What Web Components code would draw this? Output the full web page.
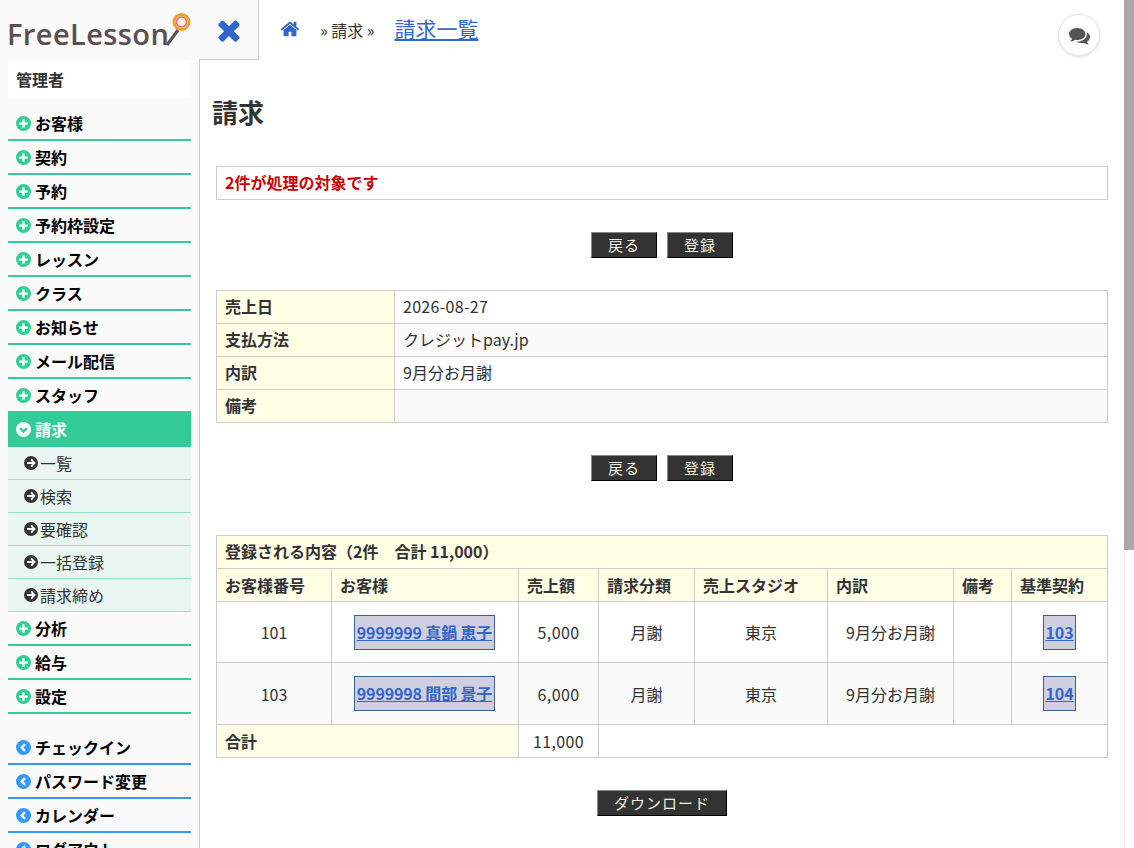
<!DOCTYPE html>
<html lang="ja">
<head>
<meta charset="utf-8">
<title>請求</title>
<style>
    html, body { margin: 0; height: 848px; overflow: hidden; background: #fff; }
    body { font-family: "Noto Sans CJK JP", "Noto Sans", sans-serif; color: #333; font-size: 16px; }
</style>
</head>
<body>
<fl-app>
    <fl-sidebar slot="sidebar">
        <fl-menu-item>お客様</fl-menu-item>
        <fl-menu-item>契約</fl-menu-item>
        <fl-menu-item>予約</fl-menu-item>
        <fl-menu-item>予約枠設定</fl-menu-item>
        <fl-menu-item>レッスン</fl-menu-item>
        <fl-menu-item>クラス</fl-menu-item>
        <fl-menu-item>お知らせ</fl-menu-item>
        <fl-menu-item>メール配信</fl-menu-item>
        <fl-menu-item>スタッフ</fl-menu-item>
        <fl-menu-item active>請求</fl-menu-item>
        <fl-sub-item>一覧</fl-sub-item>
        <fl-sub-item>検索</fl-sub-item>
        <fl-sub-item>要確認</fl-sub-item>
        <fl-sub-item>一括登録</fl-sub-item>
        <fl-sub-item>請求締め</fl-sub-item>
        <fl-menu-item>分析</fl-menu-item>
        <fl-menu-item>給与</fl-menu-item>
        <fl-menu-item>設定</fl-menu-item>
        <fl-menu-item kind="link" style="margin-top:17px">チェックイン</fl-menu-item>
        <fl-menu-item kind="link">パスワード変更</fl-menu-item>
        <fl-menu-item kind="link">カレンダー</fl-menu-item>
        <fl-menu-item kind="link">ログアウト</fl-menu-item>
    </fl-sidebar>
    <fl-header slot="header"></fl-header>
    <fl-title>請求</fl-title>
    <fl-notice>2件が処理の対象です</fl-notice>
    <fl-actions style="margin-top:32px"><fl-button>戻る</fl-button><fl-button>登録</fl-button></fl-actions>
    <fl-detail-table style="margin-top:32px"></fl-detail-table>
    <fl-actions style="margin-top:32px"><fl-button>戻る</fl-button><fl-button>登録</fl-button></fl-actions>
    <fl-invoice-table style="margin-top:54px"></fl-invoice-table>
    <fl-actions style="margin-top:32px"><fl-button>ダウンロード</fl-button></fl-actions>
</fl-app>

<script>
const ICONS = {
    home: 'M1472 992v480q0 26-19 45t-45 19h-384v-384h-256v384h-384q-26 0-45-19t-19-45v-480q0-1 .5-3t.5-3l575-474 575 474q1 2 1 6zm223-69l-62 74q-8 9-21 11h-3q-13 0-21-7l-692-577-692 577q-12 8-24 7-13-2-21-11l-62-74q-8-10-7-23.500t11-21.500l719-599q32-26 76-26t76 26l244 204v-195q0-14 9-23t23-9h192q14 0 23 9t9 23v408l219 182q10 8 11 21.500t-7 23.500z',
    times: 'M1490 1322q0 40-28 68l-136 136q-28 28-68 28t-68-28l-294-294-294 294q-28 28-68 28t-68-28l-136-136q-28-28-28-68t28-68l294-294-294-294q-28-28-28-68t28-68l136-136q28-28 68-28t68 28l294 294 294-294q28-28 68-28t68 28l136 136q28 28 28 68t-28 68l-294 294 294 294q28 28 28 68z',
    comments: 'M1408 768q0 139-94 257t-256.500 186.500-353.500 68.500q-86 0-176-16-124 88-278 128-36 9-86 16h-3q-11 0-20.500-8t-11.500-21q-1-3-1-6.500t.5-6.500 2-6l2.500-5 3.500-5.500 4-5 4.500-5 4-4.500q5-6 23-25t26-29.500 22.500-29 25-38.500 20.500-44q-124-72-195-177t-71-224q0-139 94-257t256.500-186.500 353.500-68.500 353.500 68.500 256.500 186.500 94 257zm384 256q0 120-71 224.500t-195 176.500q10 24 20.500 44t25 38.500 22.500 29 26 29.500 23 25q1 1 4 4.500t4.500 5 4 5 3.500 5.500l2.500 5 2 6 .5 6.500-1 6.500q-3 14-13 22t-22 7q-50-7-86-16-154-40-278-128-90 16-176 16-271 0-472-132 58 4 88 4 161 0 309-45t264-129q125-92 192-212t67-254q0-77-23-152 129 71 204 178t75 230z'
};
const faIcon = (name, size, color) => `<svg width="${size}" height="${size}" viewBox="0 0 1792 1792" fill="${color}" style="display:block"><path d="${ICONS[name]}"/></svg>`;

// round icons of the menu: a filled circle with the glyph in the background colour
const circleIcon = (glyph, size, color, inner) => {
    const shapes = {
        plus: `<path d="M8 3.500v9M3.500 8h9" stroke="${inner}" stroke-width="2.400" fill="none"/>`,
        down: `<path d="M4.400 6.600 8 10.200l3.600-3.600" stroke="${inner}" stroke-width="2.600" fill="none"/>`,
        left: `<path d="M9.600 4.400 6 8l3.600 3.600" stroke="${inner}" stroke-width="2.600" fill="none"/>`,
        right: `<path d="M8.200 3.900 12 8l-3.800 4.100M3.400 8H11" stroke="${inner}" stroke-width="2.200" fill="none"/>`
    };
    return `<svg width="${size}" height="${size}" viewBox="0 0 16 16" style="display:block;flex:none"><circle cx="8" cy="8" r="8" fill="${color}"/>${shapes[glyph]}</svg>`;
};

class FlApp extends HTMLElement {
    constructor() {
        super();
        this.attachShadow({ mode: 'open' }).innerHTML = /*html*/`
            <style>
                :host { display: flex; height: 848px; overflow: hidden; }
                .main { flex: 1; min-width: 0; display: flex; flex-direction: column; }
                .content { padding: 0 16px; }
                .scrollbar { width: 10px; flex: none; background: #fff; border-left: 1px solid #f1f1f1; box-sizing: border-box; }
                .thumb { height: 550px; background: #a9a9a9; margin-left: -1px; }
            </style>
            <slot name="sidebar"></slot>
            <div class="main">
                <slot name="header"></slot>
                <div class="content"><slot></slot></div>
            </div>
            <div class="scrollbar"><div class="thumb"></div></div>
        `;
    }
}

class FlSidebar extends HTMLElement {
    constructor() {
        super();
        this.attachShadow({ mode: 'open' }).innerHTML = /*html*/`
            <style>
                :host { display: block; box-sizing: border-box; width: 200px; flex: none; background: #fafafa; height: 848px; overflow: hidden; border-right: 1px solid #ccc; }
                .logo { height: 60px; position: relative; font-family: "Open Sans", sans-serif; }
                .logo span { position: absolute; left: 7px; top: 12px; font-size: 29px; font-weight: 600; line-height: 44px; color: #5b4f4f; letter-spacing: .4px; white-space: nowrap; }
                .logo svg { position: absolute; left: 0; top: 0; }
                .user { margin: 0 8px; height: 38px; line-height: 38px; background: #fff; padding-left: 8px; font-weight: bold; font-size: 16px; color: #333; }
                .menu { padding: 9px 8px 0; }
            </style>
            <div class="logo">
                <span>FreeLesson</span>
                <svg width="199" height="60">
                    <path d="M167 45 178 30" stroke="#5b4f4f" stroke-width="3" fill="none"/>
                    <circle cx="181.500" cy="22" r="7.500" fill="#f6ecdc" stroke="#f0a02e" stroke-width="3"/>
                    <circle cx="181.500" cy="22" r="5" fill="none" stroke="#d9767c" stroke-width="1.500"/>
                </svg>
            </div>
            <div class="user">管理者</div>
            <div class="menu"><slot></slot></div>
        `;
    }
}

class FlMenuItem extends HTMLElement {
    connectedCallback() {
        const link = this.getAttribute('kind') === 'link';
        const active = this.hasAttribute('active');
        const color = link ? '#3399ff' : '#33cc99';
        const glyph = link ? 'left' : active ? 'down' : 'plus';
        this.attachShadow({ mode: 'open' }).innerHTML = /*html*/`
            <style>
                :host {
                    display: flex;
                    align-items: center;
                    gap: 4px;
                    box-sizing: border-box;
                    height: 34px;
                    line-height: 30px;
                    padding-left: 8px;
                    border-bottom: 2px solid ${color};
                    font-size: 16px;
                    font-weight: bold;
                    color: ${active ? '#fff' : '#000'};
                    background: ${active ? color : 'none'};
                }
            </style>
            ${circleIcon(glyph, 15, active ? '#fff' : color, active ? color : '#fff')}
            <slot></slot>
        `;
    }
}

class FlSubItem extends HTMLElement {
    constructor() {
        super();
        this.attachShadow({ mode: 'open' }).innerHTML = /*html*/`
            <style>
                :host {
                    display: flex;
                    align-items: center;
                    gap: 2px;
                    box-sizing: border-box;
                    height: 33px;
                    line-height: 30px;
                    padding-left: 16px;
                    border-bottom: 1px solid #99dfc6;
                    background: #e9f5f1;
                    font-size: 16px;
                    color: #333;
                }
            </style>
            ${circleIcon('right', 14, '#333', '#fff')}
            <slot></slot>
        `;
    }
}

class FlHeader extends HTMLElement {
    constructor() {
        super();
        this.attachShadow({ mode: 'open' }).innerHTML = /*html*/`
            <style>
                :host { display: flex; height: 60px; flex: none; position: relative; }
                .toggle {
                    box-sizing: border-box;
                    width: 60px;
                    height: 60px;
                    margin-left: -1px;
                    background: #fafafa;
                    border-right: 1px solid #ccc;
                    border-bottom: 1px solid #ccc;
                    display: flex;
                    align-items: center;
                    justify-content: center;
                }
                nav { display: flex; align-items: center; height: 60px; padding-left: 21px; position: relative; top: -1px; }
                .home { width: 21px; margin-right: 19px; }
                .crumb { font-size: 16px; color: #333; position: relative; top: 1px; }
                a { font-size: 21px; color: #3366cc; margin-left: 20px; position: relative; top: -1px; }
                .chat {
                    position: absolute;
                    left: 858px;
                    top: 14px;
                    box-sizing: border-box;
                    width: 42px;
                    height: 42px;
                    border-radius: 50%;
                    background: #fff;
                    border: 1px solid #e3e3e3;
                    box-shadow: 0 1px 3px rgba(0,0,0,.12);
                    display: flex;
                    align-items: center;
                    justify-content: center;
                }
            </style>
            <div class="toggle">${faIcon('times', 32, '#3366cc')}</div>
            <nav>
                <span class="home">${faIcon('home', 20, '#3366cc')}</span>
                <span class="crumb">» 請求 »</span>
                <a href="#">請求一覧</a>
            </nav>
            <div class="chat">${faIcon('comments', 21, '#555')}</div>
        `;
    }
}

class FlTitle extends HTMLElement {
    constructor() {
        super();
        this.attachShadow({ mode: 'open' }).innerHTML = /*html*/`
            <style>
                :host { display: block; margin: 32px 0 34px -4px; font-size: 26px; line-height: 40px; font-weight: bold; color: #333; }
            </style>
            <slot></slot>
        `;
    }
}

class FlNotice extends HTMLElement {
    constructor() {
        super();
        this.attachShadow({ mode: 'open' }).innerHTML = /*html*/`
            <style>
                :host { display: block; box-sizing: border-box; height: 34px; line-height: 30px; border: 1px solid #ccc; padding-left: 8px; font-weight: bold; font-size: 16px; color: #cc0000; }
            </style>
            <slot></slot>
        `;
    }
}

class FlActions extends HTMLElement {
    constructor() {
        super();
        this.attachShadow({ mode: 'open' }).innerHTML = /*html*/`
            <style>
                :host { display: flex; justify-content: center; gap: 10px; }
            </style>
            <slot></slot>
        `;
    }
}

class FlButton extends HTMLElement {
    constructor() {
        super();
        this.attachShadow({ mode: 'open' }).innerHTML = /*html*/`
            <style>
                :host { display: block; }
                button {
                    display: block;
                    box-sizing: border-box;
                    height: 26px;
                    padding: 0 16px;
                    font: 15px/22px "Noto Sans CJK JP", sans-serif;
                    letter-spacing: 1px;
                    color: #eeeedd;
                    background: #333;
                    border: 1px solid;
                    border-color: #888 #000 #000 #888;
                    cursor: pointer;
                }
            </style>
            <button><slot></slot></button>
        `;
    }
}

const TABLE_STYLE = /*css*/`
    :host { display: block; }
    table { border-collapse: collapse; table-layout: fixed; width: 892px; font-size: 16px; color: #333; }
    th, td { border: 1px solid #ccc; padding: 0 8px; height: 32px; line-height: 22px; box-sizing: border-box; }
    th { background: #ffffe6; text-align: left; font-weight: bold; }
`;

class FlDetailTable extends HTMLElement {
    constructor() {
        super();
        this.attachShadow({ mode: 'open' });
    }
    connectedCallback() {
        const rows = [['売上日', '2026-08-27'], ['支払方法', 'クレジットpay.jp'], ['内訳', '9月分お月謝'], ['備考', '']];
        this.shadowRoot.innerHTML = /*html*/`
            <style>
                ${TABLE_STYLE}
                th, td { height: 33px; padding-bottom: 2px; }
                tr:nth-child(even) td { background: #fafafa; }
                tr:first-child td { letter-spacing: .3px; }
            </style>
            <table>
                <colgroup><col style="width:178px"><col></colgroup>
                ${rows.map(([k, v]) => `<tr><th>${k}</th><td>${v}</td></tr>`).join('')}
            </table>
        `;
    }
}

class FlInvoiceTable extends HTMLElement {
    constructor() {
        super();
        this.attachShadow({ mode: 'open' });
    }
    connectedCallback() {
        const widths = [115, 187, 80, 96, 133, 126, 58, 96];
        const heads = ['お客様番号', 'お客様', '売上額', '請求分類', '売上スタジオ', '内訳', '備考', '基準契約'];
        const rows = [
            ['101', '9999999 真鍋 恵子', '5,000', '103', 61],
            ['103', '9999998 間部 景子', '6,000', '104', 62]
        ];
        this.shadowRoot.innerHTML = /*html*/`
            <style>
                ${TABLE_STYLE}
                table { width: 891px; }
                th, td { height: 33px; }
                td { text-align: center; }
                tr.even td { background: #fafafa; }
                .caption { padding-bottom: 2px; }
                .amount { letter-spacing: .4px; }
                a {
                    display: inline-block;
                    padding: 0 1.5px;
                    height: 35px;
                    box-sizing: border-box;
                    line-height: 33px;
                    vertical-align: middle;
                    background: #cfcfdf;
                    border: 1px solid #3a6090;
                    color: #3366cc;
                    font-weight: bold;
                    font-size: 16px;
                    white-space: nowrap;
                }
                .customer a { letter-spacing: -.15px; position: relative; left: -.5px; }
            </style>
            <table>
                <colgroup>${widths.map(w => `<col style="width:${w}px">`).join('')}</colgroup>
                <tr><th class="caption" colspan="8">登録される内容（2件　合計 11,000）</th></tr>
                <tr>${heads.map(h => `<th>${h}</th>`).join('')}</tr>
                ${rows.map((r, i) => `
                    <tr class="${i % 2 ? 'even' : ''}" style="height:${r[4]}px">
                        <td>${r[0]}</td>
                        <td class="customer" style="padding:0"><a href="#">${r[1]}</a></td>
                        <td class="amount">${r[2]}</td>
                        <td>月謝</td>
                        <td>東京</td>
                        <td>9月分お月謝</td>
                        <td></td>
                        <td><a href="#">${r[3]}</a></td>
                    </tr>`).join('')}
                <tr>
                    <th colspan="2">合計</th>
                    <td class="amount">11,000</td>
                    <td colspan="5"></td>
                </tr>
            </table>
        `;
    }
}

customElements.define('fl-app', FlApp);
customElements.define('fl-sidebar', FlSidebar);
customElements.define('fl-menu-item', FlMenuItem);
customElements.define('fl-sub-item', FlSubItem);
customElements.define('fl-header', FlHeader);
customElements.define('fl-title', FlTitle);
customElements.define('fl-notice', FlNotice);
customElements.define('fl-actions', FlActions);
customElements.define('fl-button', FlButton);
customElements.define('fl-detail-table', FlDetailTable);
customElements.define('fl-invoice-table', FlInvoiceTable);
</script>
</body>
</html>
